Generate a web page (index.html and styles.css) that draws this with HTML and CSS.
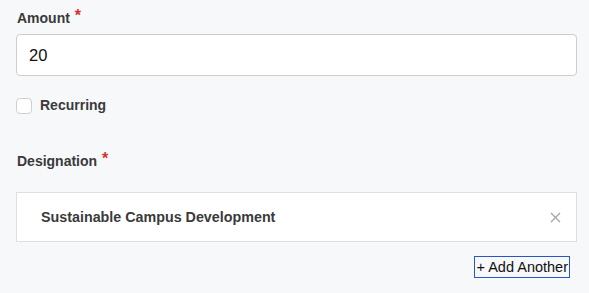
FILE: index.html
```html
<!DOCTYPE html>
<html lang="en">
<head>
    <meta charset="UTF-8">
    <meta name="viewport" content="width=device-width, initial-scale=1.0">
    <title>Donation</title>
    <link rel="stylesheet" href="styles.css">
</head>
<body>
    <form class="donation-form">
        <div class="field">
            <label class="field-label" for="amount">Amount <span class="required">*</span></label>
            <input id="amount" class="text-input" type="text" value="20">
        </div>

        <label class="checkbox-row">
            <span class="checkbox"></span>
            <span class="checkbox-label">Recurring</span>
        </label>

        <div class="field designation">
            <div class="field-label">Designation <span class="required">*</span></div>
            <div class="designation-item">
                <span class="designation-name">Sustainable Campus Development</span>
                <button type="button" class="remove" aria-label="Remove">
                    <svg width="11" height="11" viewBox="0 0 11 11">
                        <path d="M1 1 L10 10 M10 1 L1 10" stroke="#a6a6a6" stroke-width="1.3" fill="none"/>
                    </svg>
                </button>
            </div>
        </div>

        <div class="actions">
            <button type="button" class="add-another">+ Add Another</button>
        </div>
    </form>
</body>
</html>
```

FILE: styles.css
```css
body {
    margin: 0;
    background: #f7f8fa;
    color: #3a3a3a;
    font-family: "Liberation Sans", Arial, sans-serif;
}

.donation-form {
    padding: 8px 12px 0 16px;
}

.field-label {
    display: block;
    font-size: 14px;
    font-weight: bold;
    line-height: 20px;
    margin-bottom: 6px;
    padding-left: 1px;
}

.required {
    position: relative;
    top: -2px;
    color: #d2342b;
    font-size: 16px;
    margin-left: 1px;
}

.text-input {
    display: block;
    box-sizing: border-box;
    width: 100%;
    height: 42px;
    padding: 0 12px;
    border: 1px solid #cdcdcd;
    border-radius: 4px;
    background: #fff;
    font-family: "Liberation Sans", Arial, sans-serif;
    font-size: 16.5px;
    color: #111;
}

.checkbox-row {
    display: flex;
    align-items: center;
    gap: 8px;
    margin-top: 22px;
    height: 16px;
}

.checkbox {
    box-sizing: border-box;
    width: 16px;
    height: 16px;
    border: 1px solid #cfcfcf;
    border-radius: 4px;
    background: #fff;
}

.checkbox-label {
    font-size: 14px;
    font-weight: bold;
    margin-top: -2px;
}

.designation {
    margin-top: 37px;
}

.designation .field-label {
    margin-bottom: 21px;
}

.designation-item {
    display: flex;
    align-items: center;
    justify-content: space-between;
    box-sizing: border-box;
    height: 50px;
    padding: 0 15px 0 24px;
    border: 1px solid #dedfe3;
    background: #fff;
}

.designation-name {
    font-size: 14.3px;
    font-weight: bold;
}

.remove {
    display: flex;
    padding: 0;
    border: none;
    background: none;
    cursor: pointer;
}

.actions {
    display: flex;
    justify-content: flex-end;
    margin-top: 14px;
    padding-right: 7px;
}

.add-another {
    box-sizing: border-box;
    height: 22px;
    padding: 0 1px;
    border: 1px solid #2a55c4;
    background: transparent;
    font-family: "Liberation Sans", Arial, sans-serif;
    font-size: 14.5px;
    color: #111;
    cursor: pointer;
}
```
